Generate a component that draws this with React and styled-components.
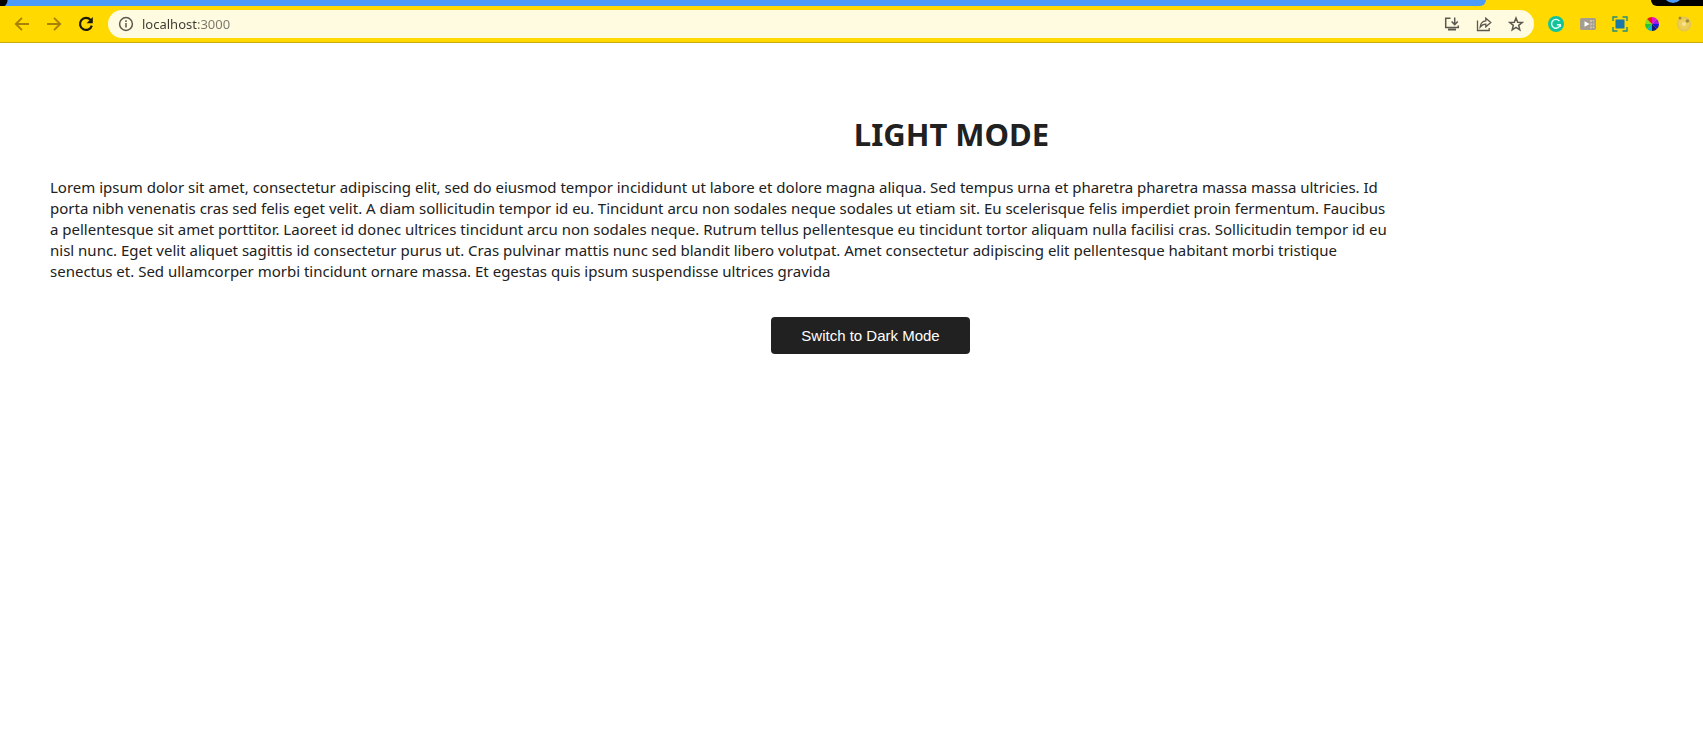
import React, { useState } from "react";
import styled, { createGlobalStyle, ThemeProvider } from "styled-components";

const themes = {
  light: { page: "#ffffff", text: "#212121", button: "#212121", buttonText: "#ffffff" },
  dark: { page: "#212121", text: "#ffffff", button: "#ffffff", buttonText: "#212121" },
};

const GlobalStyle = createGlobalStyle`
  *, *::before, *::after { box-sizing: border-box; }
  body {
    margin: 0;
    background: ${({ theme }) => theme.page};
    color: ${({ theme }) => theme.text};
    font-family: "Noto Sans", "Open Sans", sans-serif;
    font-size: 15px;
  }
`;

const Browser = styled.header`
  background: #ffd900;
  border-bottom: 1px solid #c9ab10;
`;

const TabStrip = styled.div`
  display: flex;
  justify-content: space-between;
  height: 6px;
  overflow: hidden;
`;

const ActiveTheme = styled.div`
  flex: 0 0 calc(100% - 217px);
  background: radial-gradient(circle at 0 0, #000000 7px, #4c9bf9 8px);
  border-bottom-right-radius: 6px;
`;

const WindowCorner = styled.div`
  display: flex;
  align-items: flex-end;
  width: 52px;
  padding: 0 12px 3px;
  background: #000000;
  border-bottom-left-radius: 6px;
`;

const Avatar = styled.span`
  flex: none;
  width: 20px;
  height: 20px;
  border-radius: 50%;
  background: #4c9bf9;
`;

const Toolbar = styled.div`
  display: flex;
  align-items: center;
  height: 36px;
  padding: 0 9px 0 12px;
`;

const IconGroup = styled.div`
  display: flex;
  align-items: center;
  gap: 12px;
`;

const IconButton = styled.button`
  display: grid;
  place-items: center;
  width: 20px;
  height: 20px;
  padding: 0;
  border: 0;
  background: none;
  color: ${({ $color }) => $color || "#5a5850"};
  cursor: pointer;
`;

const AddressBar = styled.form`
  flex: 1;
  display: flex;
  align-items: center;
  height: 28px;
  margin: 0 12px;
  padding: 0 8px;
  border-radius: 14px;
  background: #fffbe0;
`;

const AddressInput = styled.input`
  flex: 1;
  min-width: 0;
  margin-left: 6px;
  padding: 0;
  border: 0;
  outline: 0;
  background: linear-gradient(90deg, #3a3933 56px, #77756a 56px);
  background-clip: text;
  color: transparent;
  caret-color: #3a3933;
  font-family: inherit;
  font-size: 13px;
  line-height: 20px;
`;

const Page = styled.main`
  padding: 70px 0;
`;

const Title = styled.h1`
  margin: 0 0 21px;
  padding-left: 200px;
  font-size: 31px;
  line-height: 43px;
  font-weight: 700;
  text-align: center;
`;

const Copy = styled.p`
  width: 79%;
  margin: 0 0 35px 50px;
  line-height: 21px;
`;

const Actions = styled.div`
  display: flex;
  justify-content: center;
  padding-left: 38px;
`;

const ModeButton = styled.button`
  padding: 9px 30px;
  border: 0;
  border-radius: 4px;
  background: ${({ theme }) => theme.button};
  color: ${({ theme }) => theme.buttonText};
  font-family: "Liberation Sans", Arial, sans-serif;
  font-size: 15px;
  line-height: 19px;
  cursor: pointer;
`;

const Icon = ({ children, size = 16, stroke = 2 }) => (
  <svg width={size} height={size} viewBox="0 0 16 16" fill="none" stroke="currentColor" strokeWidth={stroke} aria-hidden="true">
    {children}
  </svg>
);

// Clockwise from the top.
const wheel = ["#e810c8", "#9a18e8", "#1818e0", "#101878", "#10b8c8", "#20c838", "#8ce020", "#e81818"];

function ColorWheel() {
  return (
    <Icon stroke={0}>
      {wheel.map((fill, i) => {
        const a = ((i * 45 - 90) * Math.PI) / 180;
        const b = a + Math.PI / 4;
        return (
          <path
            key={fill}
            fill={fill}
            d={`M8 8 L${8 + 7 * Math.cos(a)} ${8 + 7 * Math.sin(a)} A7 7 0 0 1 ${8 + 7 * Math.cos(b)} ${8 + 7 * Math.sin(b)}Z`}
          />
        );
      })}
    </Icon>
  );
}

export default function App() {
  const [mode, setMode] = useState("light");
  const next = mode === "light" ? "dark" : "light";
  const label = next === "dark" ? "Dark" : "Light";

  return (
    <ThemeProvider theme={themes[mode]}>
      <GlobalStyle />
      <Browser>
        <TabStrip>
          <ActiveTheme />
          <WindowCorner><Avatar /></WindowCorner>
        </TabStrip>
        <Toolbar>
          <IconGroup>
            <IconButton aria-label="Back" $color="#a98208">
              <Icon stroke={1.9}><path d="M15 8H2M8 1.8 1.8 8 8 14.2" /></Icon>
            </IconButton>
            <IconButton aria-label="Forward" $color="#a98208">
              <Icon stroke={1.9}><path d="M1 8h13M8 1.8 14.2 8 8 14.2" /></Icon>
            </IconButton>
            <IconButton aria-label="Reload" $color="#1d1a05">
              <Icon stroke={2.2}>
                <path d="M12.6 4A6 6 0 1 0 13.8 9.6" />
                <path d="M14.8 1v6.2H8.6z" fill="currentColor" stroke="none" />
              </Icon>
            </IconButton>
          </IconGroup>
          <AddressBar onSubmit={(e) => e.preventDefault()}>
            <IconButton type="button" aria-label="Site information">
              <Icon stroke={1.5}><circle cx="8" cy="8" r="6.4" /><path d="M8 7v4.6M8 4.2v1.7" /></Icon>
            </IconButton>
            <AddressInput aria-label="Address" defaultValue="localhost:3000" />
            <IconGroup>
              <IconButton type="button" aria-label="Install app">
                <Icon stroke={1.5}>
                  <path d="M6.5 2.2H1.7v9.3h12.6V9.5" />
                  <path d="M4 13.5h8" strokeWidth="2" />
                  <path d="M10.7 1.5v7M7.6 5.5l3.1 3.1L13.8 5.5" />
                </Icon>
              </IconButton>
              <IconButton type="button" aria-label="Share">
                <Icon stroke={1.3}>
                  <path d="M1.5 4.5v10h11.7V12" />
                  <path d="M4.2 11C4.6 7.2 6.6 5.2 9.8 4.9V2.2L14.8 6.6 9.8 10.8V8.2C7.4 8.2 5.6 9.2 4.2 11Z" />
                </Icon>
              </IconButton>
              <IconButton type="button" aria-label="Bookmark">
                <Icon stroke={1.5}>
                  <path d="m8 2 1.7 4.2 4.5.3-3.5 2.9 1.1 4.4L8 11.4l-3.8 2.4 1.1-4.4L1.8 6.5l4.5-.3Z" />
                </Icon>
              </IconButton>
            </IconGroup>
          </AddressBar>
          <IconGroup>
            <IconButton aria-label="Writing assistant">
              <Icon>
                <circle cx="8" cy="8" r="8" fill="#15c39a" stroke="none" />
                <path d="M11.4 5A4.4 4.4 0 1 0 12.3 8.7H8.9M12.3 8.7v2.4" stroke="#e6fff8" strokeWidth="1.4" />
              </Icon>
            </IconButton>
            <IconButton aria-label="Media controls">
              <Icon stroke={0}>
                <rect y="2" width="16" height="12" rx="1.8" fill="#a59d8d" />
                <path d="m4.5 5.3 5 2.7-5 2.7z" fill="#fff" />
                <path d="M10.3 4h1.4v2h-1.4zM10.3 7.2h1.4v2h-1.4zM10.3 10.4h1.4v2h-1.4zM12.8 4.2h1.4v1.4h-1.4zM12.8 7.4h1.4v1.4h-1.4zM12.8 10.6h1.4V12h-1.4z" fill="#d7d0c1" />
              </Icon>
            </IconButton>
            <IconButton aria-label="Screen capture">
              <Icon stroke={1.4}>
                <rect x="3.5" y="3.5" width="9" height="9" fill="#1878a8" stroke="none" />
                <path d="M1 5V1h4.5M10.5 1H15v4M15 11v4h-4.5M5.5 15H1v-4" stroke="#248c78" />
              </Icon>
            </IconButton>
            <IconButton aria-label="Color picker"><ColorWheel /></IconButton>
            <IconButton aria-label="Cookie manager">
              <Icon stroke={0}>
                <circle cx="8" cy="8" r="7.4" fill="#e6c653" />
                <circle cx="8" cy="8" r="5.5" fill="#edcf58" />
                <circle cx="8" cy="8" r="2" fill="#f5e29b" />
                <circle cx="4" cy="2" r="1.5" fill="#a08b35" />
                <circle cx="11.4" cy="5" r="1.8" fill="#a08b35" />
              </Icon>
            </IconButton>
          </IconGroup>
        </Toolbar>
      </Browser>
      <Page>
        <Title>{mode.toUpperCase()} MODE</Title>
        <Copy>
          Lorem ipsum dolor sit amet, consectetur adipiscing elit, sed do eiusmod tempor incididunt ut labore et dolore magna aliqua. Sed tempus urna et pharetra pharetra massa massa ultricies. Id porta nibh venenatis cras sed felis eget velit. A diam sollicitudin tempor id eu. Tincidunt arcu non sodales neque sodales ut etiam sit. Eu scelerisque felis imperdiet proin fermentum. Faucibus a pellentesque sit amet porttitor. Laoreet id donec ultrices tincidunt arcu non sodales neque. Rutrum tellus pellentesque eu tincidunt tortor aliquam nulla facilisi cras. Sollicitudin tempor id eu nisl nunc. Eget velit aliquet sagittis id consectetur purus ut. Cras pulvinar mattis nunc sed blandit libero volutpat. Amet consectetur adipiscing elit pellentesque habitant morbi tristique senectus et. Sed ullamcorper morbi tincidunt ornare massa. Et egestas quis ipsum suspendisse ultrices gravida
        </Copy>
        <Actions>
          <ModeButton type="button" onClick={() => setMode(next)}>Switch to {label} Mode</ModeButton>
        </Actions>
      </Page>
    </ThemeProvider>
  );
}
